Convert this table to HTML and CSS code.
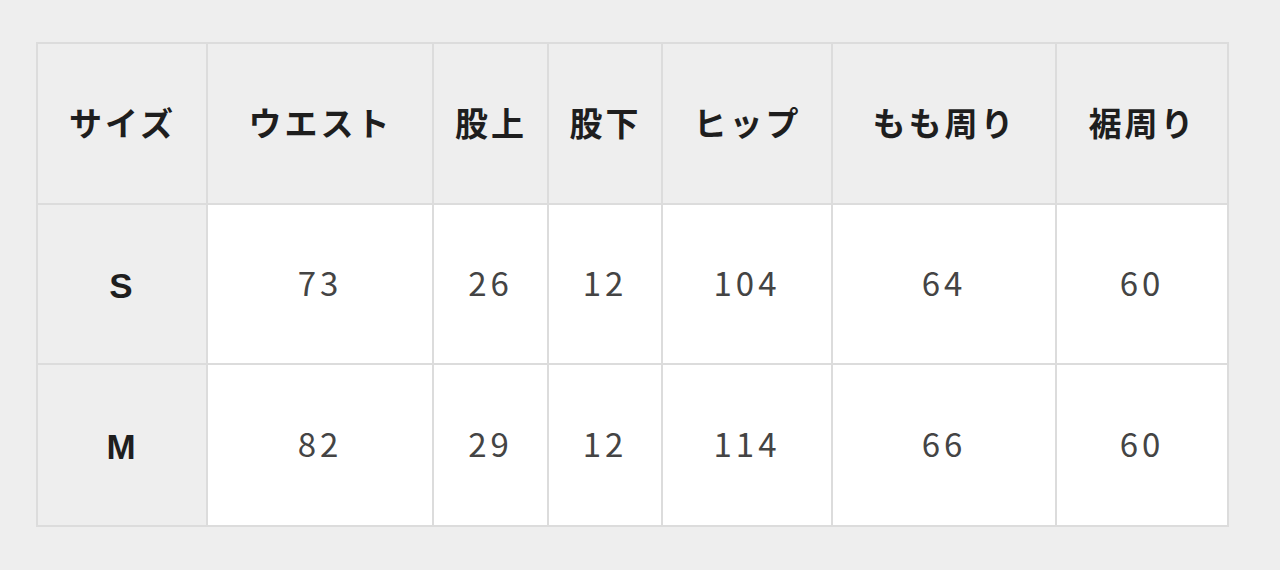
FILE: index.html
```html
<!DOCTYPE html>
<html lang="ja">
<head>
<meta charset="utf-8">
<title>サイズ表</title>
<link rel="stylesheet" href="styles.css">
</head>
<body>
<div class="wrap">
<table class="size-table">
  <colgroup>
    <col class="c1"><col class="c2"><col class="c3"><col class="c4"><col class="c5"><col class="c6"><col class="c7">
  </colgroup>
  <thead>
    <tr class="head-row">
      <th>サイズ</th><th>ウエスト</th><th>股上</th><th>股下</th><th>ヒップ</th><th>もも周り</th><th>裾周り</th>
    </tr>
  </thead>
  <tbody>
    <tr class="row-a">
      <th class="label">S</th><td>73</td><td>26</td><td>12</td><td>104</td><td>64</td><td>60</td>
    </tr>
    <tr class="row-b">
      <th class="label">M</th><td>82</td><td>29</td><td>12</td><td>114</td><td>66</td><td>60</td>
    </tr>
  </tbody>
</table>
</div>
</body>
</html>
```
FILE: styles.css
```css
html, body {
  margin: 0;
  padding: 0;
  background: #eeeeee;
}
.wrap {
  padding: 42px 0 0 36px;
}
.size-table {
  border-collapse: separate;
  border-spacing: 0;
  table-layout: fixed;
  width: 1193px;
  border-top: 2px solid #dcdcdc;
  border-left: 2px solid #dcdcdc;
  font-family: "Noto Sans CJK JP", "Noto Sans", sans-serif;
}
.c1 { width: 170px; }
.c2 { width: 226px; }
.c3 { width: 115px; }
.c4 { width: 114px; }
.c5 { width: 170px; }
.c6 { width: 224px; }
.c7 { width: 172px; }
.size-table th,
.size-table td {
  border-right: 2px solid #dcdcdc;
  border-bottom: 2px solid #dcdcdc;
  padding: 0 0 4px 0;
  text-align: center;
  vertical-align: middle;
  box-sizing: border-box;
}
.head-row { height: 161px; }
.row-a { height: 160px; }
.row-b { height: 162px; }
.head-row th {
  background: #eeeeee;
  color: #1e1e1e;
  font-size: 33px;
  font-weight: 700;
  letter-spacing: 3px;
  text-indent: 1px;
}
.size-table td {
  background: #ffffff;
  color: #444444;
  font-size: 33px;
  font-weight: 400;
  letter-spacing: 4px;
  text-indent: 0;
}
.size-table th.label {
  background: #eeeeee;
  color: #1e1e1e;
  font-family: "Liberation Sans", Arial, sans-serif;
  font-size: 35px;
  font-weight: 700;
  padding: 4px 2px 0 0;
}
```
